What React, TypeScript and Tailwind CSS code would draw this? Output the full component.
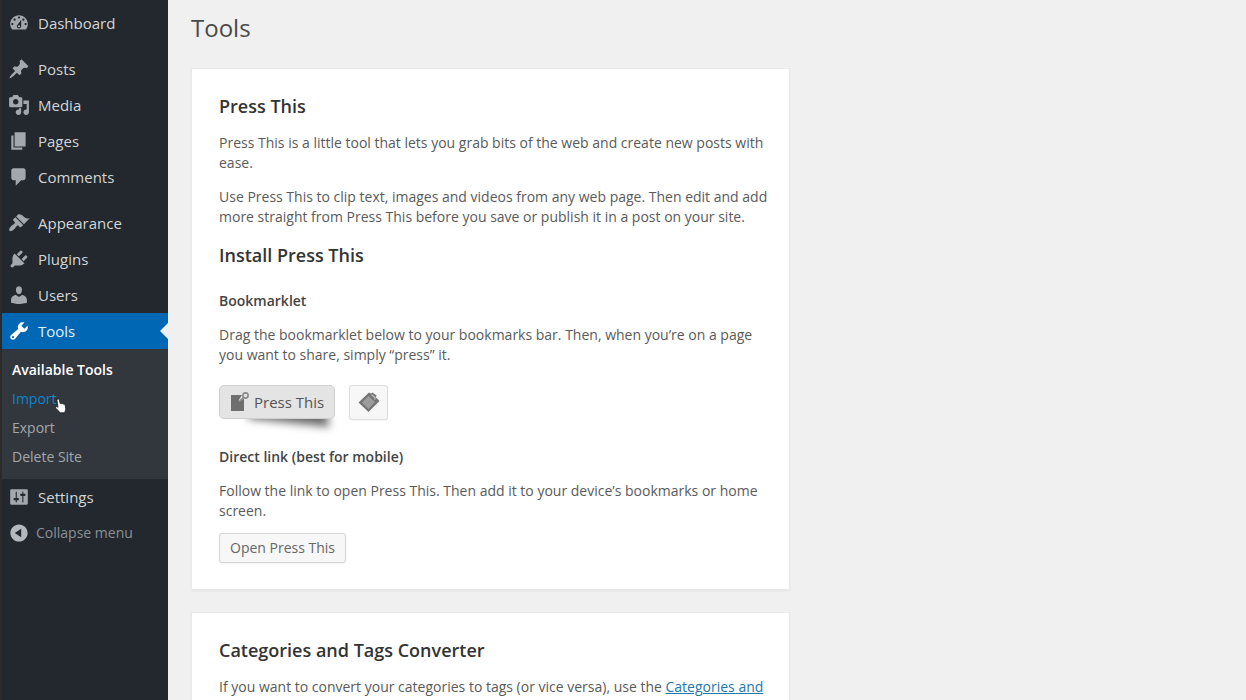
import React from 'react'

type MenuItem = { label: string; path: string; spaced?: boolean }

const topItems: MenuItem[] = [
    {
        label: 'Dashboard',
        path: 'M3.76 16h12.48c1.1-1.37 1.76-3.11 1.76-5 0-4.42-3.58-8-8-8s-8 3.58-8 8c0 1.89.66 3.63 1.76 5zM10 4c.55 0 1 .45 1 1s-.45 1-1 1-1-.45-1-1 .45-1 1-1zM6 6c.55 0 1 .45 1 1s-.45 1-1 1-1-.45-1-1 .45-1 1-1zm8 0c.55 0 1 .45 1 1s-.45 1-1 1-1-.45-1-1 .45-1 1-1zm-5.37 5.55L12 7v6c0 1.1-.9 2-2 2s-2-.9-2-2c0-.57.24-1.08.63-1.45zM4 10c.55 0 1 .45 1 1s-.45 1-1 1-1-.45-1-1 .45-1 1-1zm12 0c.55 0 1 .45 1 1s-.45 1-1 1-1-.45-1-1 .45-1 1-1zm-5 3c0-.55-.45-1-1-1s-1 .45-1 1 .45 1 1 1 1-.45 1-1z',
    },
    {
        label: 'Posts',
        spaced: true,
        path: 'M10.44 3.02l1.82-1.82 6.36 6.35-1.83 1.82c-1.05-.68-2.48-.57-3.41.36l-.75.75c-.92.93-1.04 2.35-.35 3.41l-1.83 1.82-2.41-2.41-2.8 2.79c-.42.42-3.38 2.71-3.8 2.29s1.86-3.39 2.28-3.81l2.79-2.79L4.1 9.36l1.83-1.82c1.05.69 2.48.57 3.4-.36l.75-.75c.93-.92 1.05-2.35.36-3.41z',
    },
    {
        label: 'Media',
        path: 'M13 11V4c0-.55-.45-1-1-1h-1.67L9 1H5L3.67 3H2c-.55 0-1 .45-1 1v7c0 .55.45 1 1 1h10c.55 0 1-.45 1-1zM7 4.5c1.38 0 2.5 1.12 2.5 2.5S8.38 9.5 7 9.5 4.5 8.38 4.5 7 5.62 4.5 7 4.5zM14 6h5v10.5c0 1.38-1.12 2.5-2.5 2.5S14 17.88 14 16.5s1.12-2.5 2.5-2.5c.17 0 .34.02.5.05V9h-3V6zm-4 8.05V13h2v3.5c0 1.38-1.12 2.5-2.5 2.5S7 17.88 7 16.5 8.12 14 9.5 14c.17 0 .34.02.5.05z',
    },
    {label: 'Pages', path: 'M6 15V2h10v13H6zm-1 1h8v2H3V5h2v11z'},
    {
        label: 'Comments',
        path: 'M5 2h9c1.1 0 2 .9 2 2v7c0 1.1-.9 2-2 2h-2l-5 5v-5H5c-1.1 0-2-.9-2-2V4c0-1.1.9-2 2-2z',
    },
    {
        label: 'Appearance',
        spaced: true,
        path: 'M14.48 11.06L7.41 3.99l1.5-1.5c.5-.56 2.3-.47 3.51.32 1.21.8 1.43 1.28 2.91 2.1 1.18.64 2.45 1.26 4.45.85zm-.71.71L6.7 4.7 4.93 6.47c-.39.39-.39 1.02 0 1.41l1.06 1.06c.39.39.39 1.03 0 1.42-.6.6-1.43 1.11-2.21 1.69-.35.26-.7.53-1.01.84C1.43 14.23.4 16.08 1.4 17.07c.99 1 2.84-.03 4.18-1.36.31-.31.58-.66.85-1.02.57-.78 1.08-1.61 1.69-2.21.39-.39 1.02-.39 1.41 0l1.06 1.06c.39.39 1.02.39 1.41 0z',
    },
    {
        label: 'Plugins',
        path: 'M13.11 4.36L9.87 7.6 8 5.73l3.24-3.24c.35-.34 1.05-.2 1.56.32.52.51.66 1.21.31 1.55zm-8 1.77l.91-1.12 9.01 9.01-1.19.84c-.71.71-2.63 1.16-3.82 1.16H6.14L4.9 17.26c-.59.59-1.54.59-2.12 0-.59-.58-.59-1.53 0-2.12l1.24-1.24v-3.88c0-1.13.4-3.19 1.09-3.89zm7.26 3.97l3.24-3.24c.34-.35 1.04-.21 1.55.31.52.51.66 1.21.31 1.55l-3.24 3.25z',
    },
    {
        label: 'Users',
        path: 'M10 9.25c-2.27 0-2.73-3.44-2.73-3.44C7 4.02 7.82 2 9.97 2c2.16 0 2.98 2.02 2.71 3.81 0 0-.41 3.44-2.68 3.44zm0 2.57L12.72 10c2.39 0 4.52 2.33 4.52 4.53v2.49s-3.65 1.13-7.24 1.13c-3.65 0-7.24-1.13-7.24-1.13v-2.49c0-2.25 1.94-4.48 4.47-4.48z',
    },
]

const toolsPath = 'M16.68 9.77c-1.34 1.34-3.3 1.67-4.95.99l-5.41 6.52c-.99.99-2.59.99-3.58 0s-.99-2.59 0-3.57l6.52-5.42c-.68-1.65-.35-3.61.99-4.95 1.28-1.28 3.12-1.62 4.72-1.06l-2.89 2.89 2.82 2.82 2.86-2.87c.53 1.58.18 3.39-1.08 4.65zM3.81 16.21c.4.39 1.04.39 1.43 0 .4-.4.4-1.04 0-1.43-.39-.4-1.03-.4-1.43 0-.39.39-.39 1.03 0 1.43z'
const settingsPath = 'M18 16V4c0-.55-.45-1-1-1H3c-.55 0-1 .45-1 1v12c0 .55.45 1 1 1h14c.55 0 1-.45 1-1zM8 11h1c.55 0 1 .45 1 1s-.45 1-1 1H8v1.5c0 .28-.22.5-.5.5s-.5-.22-.5-.5V13H6c-.55 0-1-.45-1-1s.45-1 1-1h1V5.5c0-.28.22-.5.5-.5s.5.22.5.5V11zm5-2h-1c-.55 0-1-.45-1-1s.45-1 1-1h1V5.5c0-.28.22-.5.5-.5s.5.22.5.5V7h1c.55 0 1 .45 1 1s-.45 1-1 1h-1v5.5c0 .28-.22.5-.5.5s-.5-.22-.5-.5V9z'
const collapsePath = 'M10 2.16c4.33 0 7.84 3.51 7.84 7.84S14.33 17.84 10 17.84 2.16 14.33 2.16 10 5.71 2.16 10 2.16zm2 11.72V6.12L6.18 9.97z'

const MenuIcon = ({path}: { path: string }) => (
    <svg viewBox="0 0 20 20" fill="currentColor" fillRule="evenodd" aria-hidden="true" className="w-[22px] h-[22px] shrink-0">
        <path d={path}/>
    </svg>
)

const MenuLink = ({label, path}: { label: string; path: string }) => (
    <a href="#" className="flex items-center h-9 pl-1.5 gap-2 text-[15px] text-[#d3d5d7] hover:text-[#00a0d2]">
        <span className="text-[#a3a8ae]"><MenuIcon path={path}/></span>
        {label}
    </a>
)

// pointing hand, sits over the hovered submenu link
const HandCursor = () => (
    <svg viewBox="0 0 12 16" className="absolute -right-2.5 top-3.5 w-3 h-4" aria-hidden="true">
        <path
            d="M2.6 1.2c.8-.5 1.6 0 1.8.8l.8 3.6c.5-.5 1.3-.4 1.6.2.5-.4 1.3-.2 1.6.4.6-.3 1.5 0 1.7.8l.6 3.2c.2 1.2-.1 2.1-.6 3l-.3 1.6H4.6l-.5-1.2L1 10.4c-.6-.8-.4-1.5.1-1.7.6-.3 1.3 0 1.9.7L2 2.6c-.1-.6.1-1.1.6-1.4z"
            fill="#fff" stroke="#15181b" strokeWidth=".8"
        />
    </svg>
)

const Sidebar = () => (
    <nav aria-label="Main menu" className="w-[168px] shrink-0 border-l-2 border-[#2b2b2c] bg-[#22282e] pt-[5px]">
        <ul>
            {topItems.map((item) => (
                <li key={item.label} className={item.spaced ? 'mt-2.5' : ''}>
                    <MenuLink label={item.label} path={item.path}/>
                </li>
            ))}
            <li>
                <a href="#" aria-current="page" className="relative flex items-center h-9 pl-1.5 gap-2 text-[15px] text-[#e3f0f9] bg-[#0067b4]">
                    <span className="text-white"><MenuIcon path={toolsPath}/></span>
                    Tools
                    <span className="absolute right-0 top-1/2 -translate-y-1/2 border-y-8 border-r-8 border-y-transparent border-r-[#f0f0f0]"></span>
                </a>
                <ul className="bg-[#32373d] pt-1.5 pb-2 text-sm text-[#a2a7ac]">
                    <li><a href="#" className="flex items-center h-[29px] pl-2.5 font-semibold text-white">Available Tools</a></li>
                    <li className="flex">
                        <a href="#" className="relative flex items-center h-[29px] pl-2.5 text-[#0c85cb]">
                            Import
                            <HandCursor/>
                        </a>
                    </li>
                    <li><a href="#" className="flex items-center h-[29px] pl-2.5">Export</a></li>
                    <li><a href="#" className="flex items-center h-[29px] pl-2.5">Delete Site</a></li>
                </ul>
            </li>
            <li><MenuLink label="Settings" path={settingsPath}/></li>
        </ul>
        <button type="button" className="flex items-center h-9 pl-1.5 gap-1.5 text-sm text-[#8b9096]">
            <span className="text-[#b4b9be]"><MenuIcon path={collapsePath}/></span>
            Collapse menu
        </button>
    </nav>
)

const Card = ({children}: { children: React.ReactNode }) => (
    <section className="max-w-[599px] bg-white border border-[#e9e9e9] shadow-xs pl-[27px] pr-[18px] pt-[25px] pb-[26px] mb-[22px]">
        {children}
    </section>
)

const App = () => {
    return (
        <div className="flex h-screen overflow-hidden bg-[#f0f0f0] font-['Open_Sans',sans-serif] text-sm leading-5 text-[#5a5a5a]">
            <Sidebar/>
            <main className="flex-1 pl-[23px] pr-6 pt-3">
                <h1 className="text-2xl leading-8 text-[#4a4a4a] mb-6">Tools</h1>
                <Card>
                    <h2 className="text-lg leading-6 font-semibold text-[#333]">Press This</h2>
                    <p className="mt-[15px]">
                        Press This is a little tool that lets you grab bits of the web and create new posts with ease.
                    </p>
                    <p className="mt-3.5">
                        Use Press This to clip text, images and videos from any web page. Then edit and add more
                        straight from Press This before you save or publish it in a post on your site.
                    </p>
                    <h2 className="mt-4 text-lg leading-6 font-semibold text-[#333]">Install Press This</h2>
                    <h3 className="mt-6 font-semibold text-[#444]">Bookmarklet</h3>
                    <p className="mt-3.5">
                        Drag the bookmarklet below to your bookmarks bar. Then, when you’re on a page you want to
                        share, simply “press” it.
                    </p>
                    <div className="flex mt-5 gap-3.5">
                        <a href="#" className="relative isolate">
                            <span className="absolute -z-10 right-2.5 bottom-2 w-[70%] h-[55%] skew-x-[20deg] rotate-6 shadow-[0_10px_8px_rgba(0,0,0,0.6)]"></span>
                            <span className="flex items-center h-[34px] px-2.5 gap-1 rounded-[5px] border border-[#cfcfcf] bg-[#e4e4e4] text-[15px] text-[#555]">
                                <svg viewBox="0 0 20 20" className="w-5 h-5" aria-hidden="true">
                                    <path d="M1 3h11L8.5 8.5l1 1L14 6.5V19H1z" fill="#6f6f6f"/>
                                    <circle cx="15.5" cy="3.5" r="2.6" fill="none" stroke="#8a8a8a" strokeWidth="1.6"/>
                                    <path d="M13.5 5.5L9 9.5" stroke="#8a8a8a" strokeWidth="1.6"/>
                                </svg>
                                Press This
                            </span>
                        </a>
                        <button type="button" aria-label="Copy Press This bookmarklet code" className="flex items-center justify-center w-[39px] h-[35px] rounded-[3px] border border-[#ddd] bg-[#f7f7f7] shadow-xs">
                            <svg viewBox="0 0 22 22" className="w-[22px] h-[22px]" aria-hidden="true">
                                <path d="M11 .5l2 1 1.500-1 4 3-.5 2 3.500 3.500L10.500 20 .5 10.500z" fill="#757575"/>
                                <path d="M10.500 4L17 10l-6.500 7L4 10.500z" fill="#9c9c9c"/>
                                <path d="M13.500 2.800l3.500 2.700v2" fill="none" stroke="#c4c4c4" strokeWidth="1.200"/>
                            </svg>
                        </button>
                    </div>
                    <h3 className="mt-[27px] font-semibold text-[#444]">Direct link (best for mobile)</h3>
                    <p className="mt-3.5">
                        Follow the link to open Press This. Then add it to your device’s bookmarks or home screen.
                    </p>
                    <button type="button" className="block mt-3 h-[30px] px-2.5 rounded-[3px] border border-[#d5d5d5] bg-[#f7f7f7] text-[#666] shadow-xs">
                        Open Press This
                    </button>
                </Card>
                <Card>
                    <h2 className="text-lg leading-6 font-semibold text-[#333]">Categories and Tags Converter</h2>
                    <p className="mt-[15px]">
                        If you want to convert your categories to tags (or vice versa), use the{' '}
                        <a href="#" className="text-[#2277ad] underline">Categories and</a>
                    </p>
                </Card>
            </main>
        </div>
    )
}
export default App
